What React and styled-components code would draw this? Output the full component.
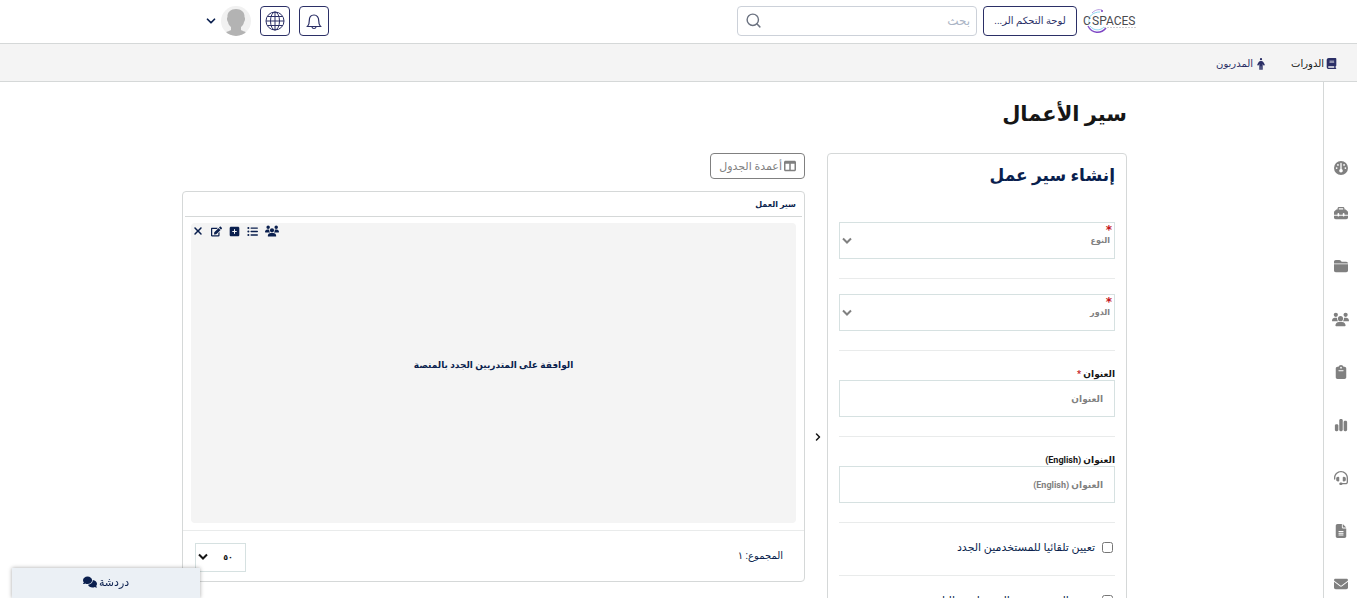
import styled, { createGlobalStyle, ThemeProvider } from 'styled-components';
import {
    FaBook,
    FaChartSimple,
    FaClipboard,
    FaComments,
    FaEnvelope,
    FaFileLines,
    FaFolderClosed,
    FaGauge,
    FaHeadset,
    FaListUl,
    FaPerson,
    FaSquarePlus,
    FaTableColumns,
    FaToolbox,
    FaUsers,
    FaXmark,
} from 'react-icons/fa6';
import { FaEdit } from 'react-icons/fa';
import { ChevronDown, ChevronRight, Search } from 'lucide-react';

const theme = {
    colors: {
        navy: '#2b2f66',
        ink: '#0a1f4e',
        black: '#161616',
        gray: '#808080',
        line: '#d5d8d8',
        hairline: '#e9ebeb',
        field: '#d6e1e1',
        panel: '#f4f4f4',
        red: '#c4161c',
    },
    fontSizes: {
        xs: '8px',
        s: '9px',
        m: '10px',
        l: '11px',
        input: '12px',
        xl: '17px',
        xxl: '21px',
    },
};

const GlobalStyle = createGlobalStyle`
    *, *::before, *::after {
        box-sizing: border-box;
    }

    body {
        margin: 0;
        background: #fff;
        font-family: Roboto, 'DejaVu Sans', sans-serif;
        font-size: 10px;
        color: #0a1f4e;
    }

    button, input, select {
        font-family: inherit;
    }

    h1, h2, ul {
        margin: 0;
        padding: 0;
    }
`;

const Page = styled.div`
    height: 100vh;
    overflow: hidden;
    display: flex;
    flex-direction: column;
`;

const Header = styled.header`
    flex: none;
    height: 44px;
    display: flex;
    align-items: center;
    gap: 6px;
    padding: 0 220px 2px 204px;
    border-bottom: 1px solid ${props => props.theme.colors.line};
`;

const LogoLink = styled.a`
    display: flex;
    height: 30px;
`;

const DashboardButton = styled.button`
    width: 94px;
    height: 30px;
    padding: 0 8px;
    border: 1px solid ${props => props.theme.colors.navy};
    border-radius: 4px;
    background: #fff;
    color: ${props => props.theme.colors.navy};
    font-size: ${props => props.theme.fontSizes.m};
    white-space: nowrap;
`;

const SearchBox = styled.label`
    width: 240px;
    height: 30px;
    display: flex;
    align-items: center;
    padding: 0 6px 0 7px;
    border: 1px solid #ccd1d9;
    border-radius: 4px;
    color: #6b7280;
`;

const SearchInput = styled.input`
    flex: 1;
    min-width: 0;
    padding: 0;
    border: 0;
    outline: 0;
    background: none;
    font-size: ${props => props.theme.fontSizes.input};

    &::placeholder {
        color: #aab4c5;
    }
`;

const HeaderTools = styled.div`
    display: flex;
    align-items: center;
    gap: 9px;
    margin-right: auto;
`;

const SquareButton = styled.button`
    width: 30px;
    height: 30px;
    display: grid;
    place-items: center;
    padding: 0;
    border: 1px solid ${props => props.theme.colors.navy};
    border-radius: 4px;
    background: #fff;
    color: ${props => props.theme.colors.navy};
`;

const ProfileButton = styled.button`
    display: flex;
    align-items: center;
    gap: 3px;
    padding: 0;
    border: 0;
    background: none;
    color: ${props => props.theme.colors.ink};
`;

const SubNav = styled.nav`
    flex: none;
    height: 38px;
    display: flex;
    align-items: center;
    gap: 24px;
    padding: 0 20px;
    background: ${props => props.theme.colors.panel};
    border-bottom: 1px solid ${props => props.theme.colors.line};
`;

const SubNavLink = styled.a`
    display: flex;
    align-items: center;
    gap: 2px;
    padding-top: 2px;
    color: ${props => (props.$active ? props.theme.colors.black : props.theme.colors.navy)};
    font-size: ${props => props.theme.fontSizes.m};
    text-decoration: none;

    svg {
        color: ${props => props.theme.colors.navy};
    }
`;

const Body = styled.div`
    flex: 1;
    min-height: 0;
    display: flex;
`;

const Rail = styled.aside`
    flex: none;
    width: 34px;
    padding-top: 78px;
    border-left: 1px solid ${props => props.theme.colors.line};
`;

const RailList = styled.ul`
    display: flex;
    flex-direction: column;
    align-items: center;
    gap: 37px;
    list-style: none;

    li:first-child {
        margin-bottom: -8px;
    }
`;

const RailLink = styled.a`
    display: flex;
    height: 16px;
    align-items: center;
    color: ${props => props.theme.colors.gray};
    font-size: ${props => props.$size || '14px'};
`;

const Main = styled.main`
    flex: 1;
    min-width: 0;
    padding: 14px 196px 0 182px;
`;

const PageTitle = styled.h1`
    height: 57px;
    line-height: 36px;
    color: ${props => props.theme.colors.black};
    font-size: ${props => props.theme.fontSizes.xxl};
`;

const Columns = styled.div`
    display: flex;
    align-items: flex-start;
`;

const FormCard = styled.form`
    flex: none;
    width: 300px;
    padding: 0 11px 20px;
    border: 1px solid ${props => props.theme.colors.line};
    border-radius: 4px;
`;

const FormTitle = styled.h2`
    height: 53px;
    line-height: 42px;
    color: ${props => props.theme.colors.ink};
    font-size: ${props => props.theme.fontSizes.xl};
`;

const Field = styled.div`
    display: flex;
    flex-direction: column;
    padding: 15px 0 19px;
    border-bottom: 1px solid ${props => props.theme.colors.hairline};
`;

const SelectBox = styled.div`
    height: 37px;
    display: grid;
    border: 1px solid ${props => props.theme.colors.field};
    color: ${props => props.theme.colors.gray};

    > * {
        grid-area: 1 / 1;
    }

    svg {
        align-self: center;
        justify-self: end;
        pointer-events: none;
    }
`;

const RequiredMark = styled.span`
    height: 12px;
    padding-right: 2px;
    color: ${props => props.theme.colors.red};
    font-family: 'DejaVu Sans', sans-serif;
    font-size: 12px;
    font-weight: 700;
    line-height: 15px;
    pointer-events: none;
`;

const Select = styled.select`
    appearance: none;
    width: 100%;
    padding: 0 4px;
    border: 0;
    border-radius: 0;
    background: transparent;
    color: inherit;
    font-size: ${props => props.theme.fontSizes.xs};
    font-weight: 700;
`;

const FieldLabel = styled.label`
    height: 14px;
    line-height: 16px;
    color: ${props => props.theme.colors.black};
    font-size: ${props => props.theme.fontSizes.s};
    font-weight: 700;

    span {
        color: ${props => props.theme.colors.red};
    }
`;

const TextInput = styled.input`
    height: 37px;
    padding: 0 11px;
    border: 1px solid ${props => props.theme.colors.field};
    border-radius: 0;
    font-size: ${props => props.theme.fontSizes.s};
    font-weight: 700;

    &::placeholder {
        color: ${props => props.theme.colors.gray};
    }
`;

const CheckLabel = styled.label`
    height: 18px;
    display: flex;
    align-items: center;
    gap: 7px;
    padding-right: 2px;
    font-size: ${props => props.theme.fontSizes.l};
    white-space: nowrap;

    input {
        width: 11px;
        height: 11px;
        margin: 0;
    }
`;

const CollapseButton = styled.button`
    flex: none;
    width: 22px;
    display: grid;
    place-items: center;
    margin-top: 278px;
    padding: 0 0 0 4px;
    border: 0;
    background: none;
    color: ${props => props.theme.colors.black};
`;

const TableColumn = styled.section`
    flex: 1;
    min-width: 0;
    display: flex;
    flex-direction: column;
    align-items: flex-start;
    gap: 12px;
`;

const ColumnsButton = styled.button`
    height: 26px;
    display: flex;
    align-items: center;
    gap: 2px;
    padding: 0 8px;
    border: 1px solid ${props => props.theme.colors.gray};
    border-radius: 4px;
    background: #fff;
    color: ${props => props.theme.colors.gray};
    font-size: ${props => props.theme.fontSizes.l};
`;

const TableCard = styled.div`
    width: 100%;
    border: 1px solid ${props => props.theme.colors.line};
    border-radius: 4px;
`;

const Table = styled.table`
    width: 100%;
    border-spacing: 2px 0;

    th {
        height: 25px;
        padding: 0 6px;
        border-bottom: 1px solid ${props => props.theme.colors.line};
        font-size: ${props => props.theme.fontSizes.xs};
        text-align: right;
    }

    td {
        padding: 6px 6px 7px;
    }
`;

const Workflow = styled.div`
    height: 300px;
    display: flex;
    flex-direction: column;
    border-radius: 4px;
    background: ${props => props.theme.colors.panel};
`;

const Actions = styled.div`
    display: flex;
    justify-content: flex-end;
    align-items: center;
    gap: 7px;
    height: 16px;
    padding-left: 1px;
`;

const ActionButton = styled.button`
    min-width: 11px;
    display: grid;
    place-items: center;
    padding: 0;
    border: 0;
    background: none;
    color: ${props => props.theme.colors.ink};
    font-size: ${props => props.$size || '11px'};
`;

const WorkflowName = styled.strong`
    flex: 1;
    display: grid;
    place-items: center;
    padding-bottom: 32px;
    font-size: ${props => props.theme.fontSizes.s};
`;

const TableFooter = styled.footer`
    height: 51px;
    display: flex;
    align-items: center;
    justify-content: space-between;
    padding: 2px 21px 0 12px;
    border-top: 1px solid ${props => props.theme.colors.hairline};
`;

const Total = styled.span`
    padding-bottom: 4px;
`;

const PageSize = styled(SelectBox)`
    width: 51px;
    height: 29px;
    color: ${props => props.theme.colors.black};

    select {
        padding: 0 12px;
    }
`;

const ChatButton = styled.button`
    position: fixed;
    bottom: 0;
    left: 12px;
    width: 188px;
    height: 30px;
    display: flex;
    align-items: center;
    justify-content: center;
    gap: 2px;
    padding: 0 0 2px;
    border: 0;
    background: #ebf0f5;
    box-shadow: 0 0 4px rgba(0, 0, 0, .35);
    color: ${props => props.theme.colors.ink};
    font-size: ${props => props.theme.fontSizes.l};
`;

const LogoText = styled.text`
    font-family: Roboto, sans-serif;
    font-size: 12px;
    fill: #4a4a4f;
`;

function Logo() {
    return (
        <svg width='54' height='30' viewBox='0 0 54 30' direction='ltr' aria-label='C SPACES'>
            <defs>
                <linearGradient id='ring' x1='0' y1='0' x2='1' y2='1'>
                    <stop offset='0' stopColor='#8a5bd0' />
                    <stop offset='1' stopColor='#7a3fc0' />
                </linearGradient>
            </defs>
            <path d='M9 7C12 4 15 3 19 4' fill='none' stroke='#b79be0' strokeWidth='1' />
            <path d='M6 17C5 10 10 6 17 6' fill='none' stroke='#8fd9f2' strokeWidth='1' />
            <path d='M5 20C9 28 18 28 23 22' fill='none' stroke='url(#ring)' strokeWidth='1.500' />
            <path d='M7 20C11 25 17 25 21 21' fill='none' stroke='#8fd9f2' strokeWidth='1' />
            <circle cx='19' cy='5' r='1' fill='#7a3fc0' />
            <LogoText x='0' y='19'>C</LogoText>
            <LogoText x='9' y='19'>SPACES</LogoText>
            <path d='M21 21.500H53' stroke='#cfcfd4' strokeWidth='1' strokeDasharray='2 1' />
        </svg>
    );
}

function GlobeIcon() {
    return (
        <svg width='20' height='20' viewBox='0 0 20 20' fill='none' stroke='currentColor'>
            <circle cx='10' cy='10' r='9' />
            <ellipse cx='10' cy='10' rx='4.500' ry='9' />
            <path d='M10 1V19M1 10H19M2.500 5.500H17.500M2.500 14.500H17.500' />
        </svg>
    );
}

function BellIcon() {
    return (
        <svg width='16' height='18' viewBox='0 0 16 18' fill='none' stroke='currentColor' strokeWidth='1.200'>
            <path d='M1.500 14.500C3 13 3.300 11.500 3.300 8.500C3.300 5.300 5 3 8 3C11 3 12.700 5.300 12.700 8.500C12.700 11.500 13 13 14.500 14.500ZM6 15C6.300 17 9.700 17 10 15' />
        </svg>
    );
}

function Avatar() {
    return (
        <svg width='30' height='30' viewBox='0 0 30 30'>
            <clipPath id='face'><circle cx='15' cy='15' r='15' /></clipPath>
            <g clipPath='url(#face)'>
                <rect width='30' height='30' fill='#f1f1f1' />
                <path d='M15 3C20 3 24 6 23.500 11C24.500 12 24 15 23 16C22.500 19 21 20 20 21V24C22 25.500 25 25 26 28V30H4V28C5 25 8 25.500 10 24V21C9 20 7.500 19 7 16C6 15 5.500 12 6.500 11C6 6 10 3 15 3Z' fill='#b3b3b3' />
            </g>
        </svg>
    );
}

function SelectArrow() {
    return (
        <svg width='14' height='10' viewBox='0 0 14 10' fill='none' stroke='currentColor' strokeWidth='2'>
            <path d='M3 2.500L7 6.500L11 2.500' />
        </svg>
    );
}

const railItems = [
    { label: 'لوحة التحكم', icon: FaGauge },
    { label: 'الأدوات', icon: FaToolbox },
    { label: 'الملفات', icon: FaFolderClosed },
    { label: 'المستخدمون', icon: FaUsers, size: '17px' },
    { label: 'المهام', icon: FaClipboard },
    { label: 'التقارير', icon: FaChartSimple },
    { label: 'الدعم', icon: FaHeadset },
    { label: 'المستندات', icon: FaFileLines },
    { label: 'الرسائل', icon: FaEnvelope },
];

const actions = [
    { label: 'المستخدمون', icon: FaUsers, size: '14px' },
    { label: 'القائمة', icon: FaListUl },
    { label: 'إضافة', icon: FaSquarePlus },
    { label: 'تعديل', icon: FaEdit },
    { label: 'حذف', icon: FaXmark, size: '12px' },
];

function SelectField({ label }) {
    return (
        <Field>
            <SelectBox>
                <Select aria-label={label} required defaultValue=''>
                    <option value=''>{label}</option>
                </Select>
                <RequiredMark>*</RequiredMark>
                <SelectArrow />
            </SelectBox>
        </Field>
    );
}

function TextField({ id, label, required }) {
    return (
        <Field>
            <FieldLabel htmlFor={id}>{label} {required && <span>*</span>}</FieldLabel>
            <TextInput id={id} placeholder={label} required={required} />
        </Field>
    );
}

function CheckField({ label }) {
    return (
        <Field>
            <CheckLabel>
                <input type='checkbox' />
                {label}
            </CheckLabel>
        </Field>
    );
}

function App() {
    return (
        <ThemeProvider theme={theme}>
            <GlobalStyle />
            <Page dir='rtl' lang='ar'>
                <Header>
                    <LogoLink href='#'><Logo /></LogoLink>
                    <DashboardButton>لوحة التحكم الر...</DashboardButton>
                    <SearchBox>
                        <SearchInput type='text' placeholder='بحث' aria-label='بحث' />
                        <Search size={17} strokeWidth={2} />
                    </SearchBox>
                    <HeaderTools>
                        <SquareButton aria-label='الإشعارات'><BellIcon /></SquareButton>
                        <SquareButton aria-label='اللغة'><GlobeIcon /></SquareButton>
                        <ProfileButton aria-label='الحساب'>
                            <Avatar />
                            <ChevronDown size={14} strokeWidth={3} />
                        </ProfileButton>
                    </HeaderTools>
                </Header>
                <SubNav>
                    <SubNavLink href='#' $active><FaBook size={11} />الدورات</SubNavLink>
                    <SubNavLink href='#'><FaPerson size={12} width={8} />المدربون</SubNavLink>
                </SubNav>
                <Body>
                    <Rail>
                        <RailList>
                            {railItems.map(({ label, icon: Icon, size }) => (
                                <li key={label}>
                                    <RailLink href='#' aria-label={label} $size={size}><Icon /></RailLink>
                                </li>
                            ))}
                        </RailList>
                    </Rail>
                    <Main>
                        <PageTitle>سير الأعمال</PageTitle>
                        <Columns>
                            <FormCard>
                                <FormTitle>إنشاء سير عمل</FormTitle>
                                <SelectField label='النوع' />
                                <SelectField label='الدور' />
                                <TextField id='title' label='العنوان' required />
                                <TextField id='title-en' label='العنوان (English)' />
                                <CheckField label='تعيين تلقائيا للمستخدمين الجدد' />
                                <CheckField label='تعيين المستخدمين المسجلين حاليا' />
                            </FormCard>
                            <CollapseButton type='button' aria-label='طي'>
                                <ChevronRight size={12} strokeWidth={3} />
                            </CollapseButton>
                            <TableColumn>
                                <ColumnsButton><FaTableColumns size={12} />أعمدة الجدول</ColumnsButton>
                                <TableCard>
                                    <Table>
                                        <thead>
                                            <tr><th>سير العمل</th></tr>
                                        </thead>
                                        <tbody>
                                            <tr>
                                                <td>
                                                    <Workflow>
                                                        <Actions>
                                                            {actions.map(({ label, icon: Icon, size }) => (
                                                                <ActionButton key={label} aria-label={label} $size={size}>
                                                                    <Icon />
                                                                </ActionButton>
                                                            ))}
                                                        </Actions>
                                                        <WorkflowName>الوافقة على المتدربين الجدد بالمنصة</WorkflowName>
                                                    </Workflow>
                                                </td>
                                            </tr>
                                        </tbody>
                                    </Table>
                                    <TableFooter>
                                        <Total>المجموع: ١</Total>
                                        <PageSize>
                                            <Select aria-label='عدد الصفوف' defaultValue='50'>
                                                <option value='50'>٥٠</option>
                                            </Select>
                                            <SelectArrow />
                                        </PageSize>
                                    </TableFooter>
                                </TableCard>
                            </TableColumn>
                        </Columns>
                    </Main>
                </Body>
                <ChatButton>دردشة<FaComments size={14} /></ChatButton>
            </Page>
        </ThemeProvider>
    );
}

export default App;
